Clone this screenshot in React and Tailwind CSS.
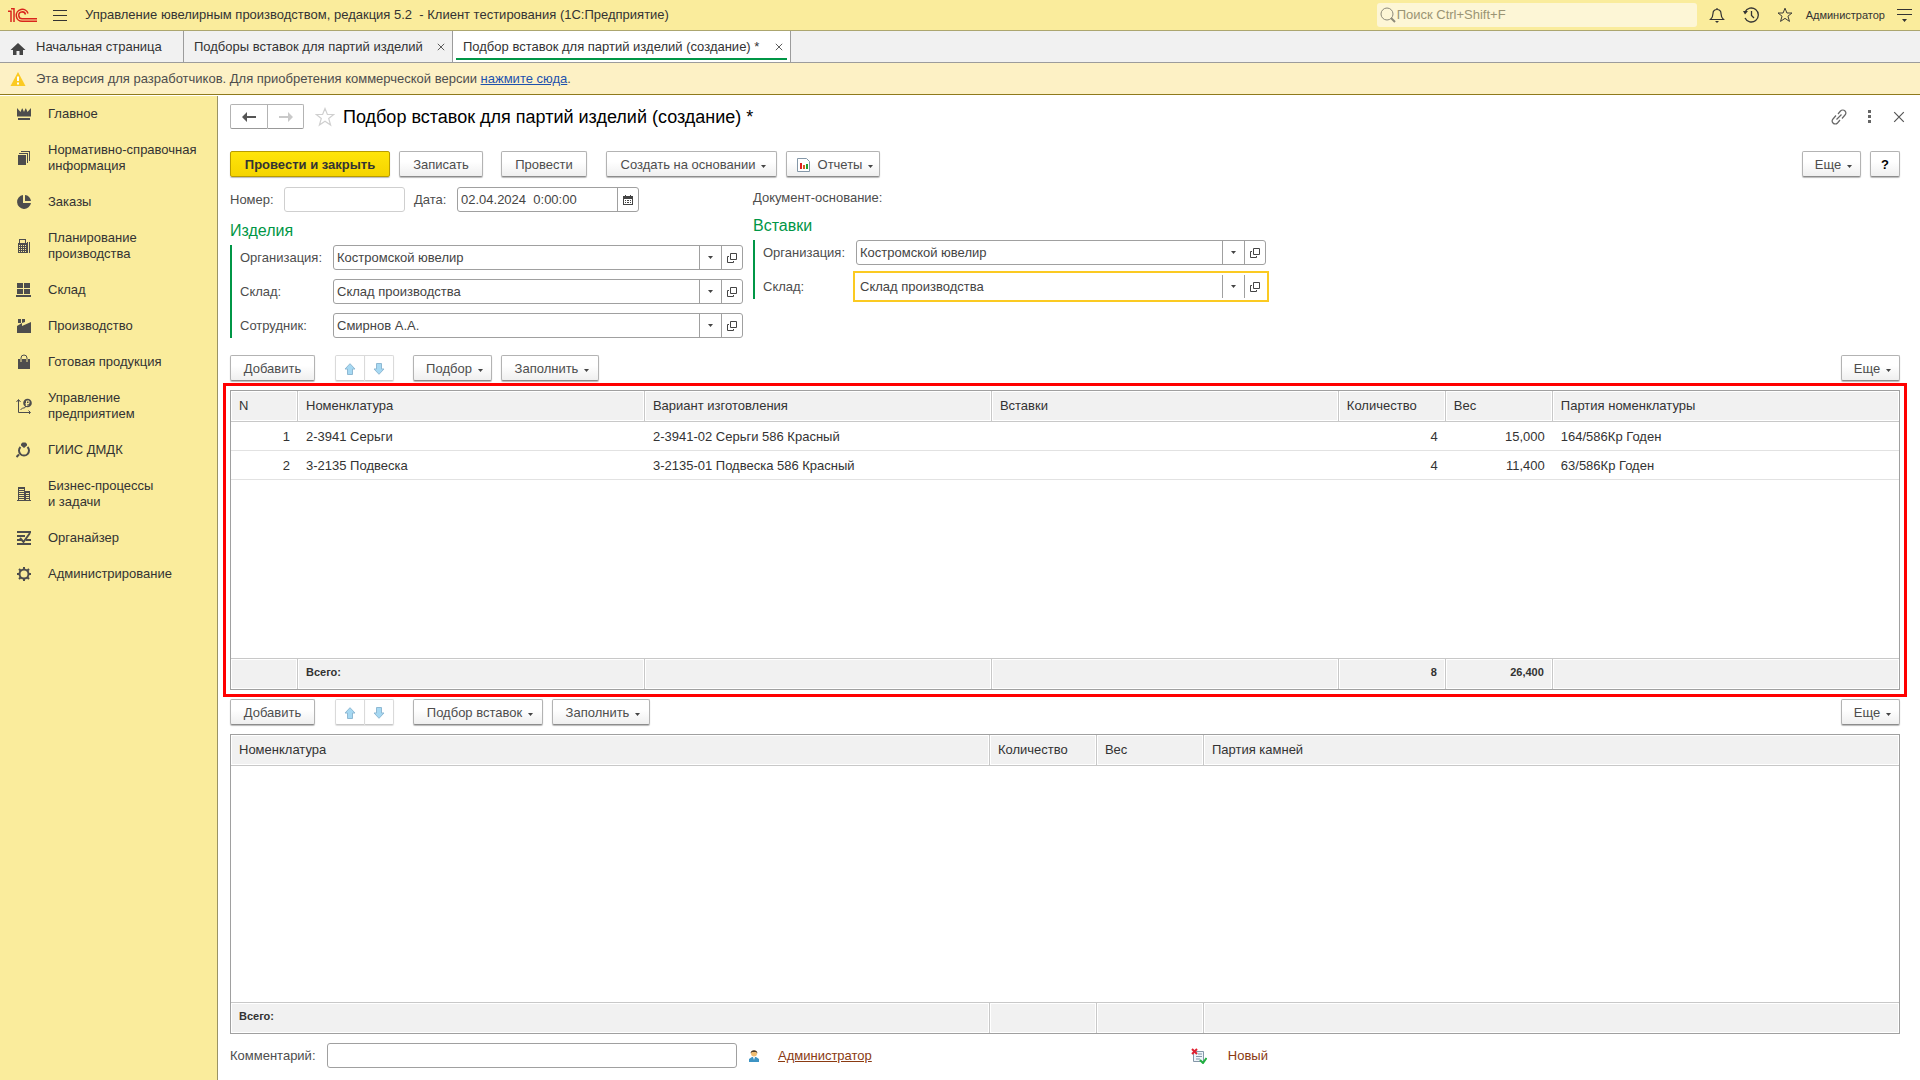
import React, { useState } from 'react';

const sections = [
  { label: 'Главное', icon: 'crown' },
  { label: 'Нормативно-справочная информация', icon: 'books' },
  { label: 'Заказы', icon: 'pie' },
  { label: 'Планирование производства', icon: 'calc' },
  { label: 'Склад', icon: 'boxes' },
  { label: 'Производство', icon: 'factory' },
  { label: 'Готовая продукция', icon: 'bag' },
  { label: 'Управление предприятием', icon: 'growth' },
  { label: 'ГИИС ДМДК', icon: 'ring' },
  { label: 'Бизнес-процессы и\u00a0задачи', icon: 'buildings' },
  { label: 'Органайзер', icon: 'organizer' },
  { label: 'Администрирование', icon: 'gear' }
];

const items = [
  { n: 1, name: '2-3941 Серьги', variant: '2-3941-02 Серьги 586 Красный', inserts: '', qty: '4', weight: '15,000', batch: '164/586Кр Годен' },
  { n: 2, name: '3-2135 Подвеска', variant: '3-2135-01 Подвеска 586 Красный', inserts: '', qty: '4', weight: '11,400', batch: '63/586Кр Годен' }
];

const sectionIcons = {
  crown: (
    <>
      <path d="M1 2l3.500 4L6 2.500h.5L8 6l1.500-3.500h.5L11.500 6 15 2v8.500H1z" />
      <path d="M2 12h12v2H2z" />
    </>
  ),
  books: (
    <g shapeRendering="crispEdges">
      <path d="M2 5h8v10H2z" />
      <path d="M3 3h9v10h-1V4H3z" />
      <path d="M5 1h9v10h-1V2H5z" />
    </g>
  ),
  pie: (
    <>
      <path d="M7 1a7 7 0 1 0 8 8H7z" />
      <path d="M9 1a6.500 6.500 0 0 1 6 6H9z" />
    </>
  ),
  calc: (
    <g shapeRendering="crispEdges">
      <path fillRule="evenodd" d="M3 1h7v4h1v10H2V5h1zM4 2v3h5V2zM3 7v1h1V7zM5 7v1h1V7zM7 7v1h1V7zM9 7v1h1V7zM3 9v1h1V9zM5 9v1h1V9zM7 9v1h1V9zM9 9v1h1V9zM3 11v1h1v-1zM5 11v1h1v-1zM7 11v1h1v-1zM9 11v1h1v-1zM3 13v1h1v-1zM5 13v1h1v-1zM7 13v1h1v-1zM9 13v1h1v-1z" />
      <path d="M11 4h1v11h-1zM13 4h1v11h-1z" />
    </g>
  ),
  boxes: <path shapeRendering="crispEdges" d="M1 1h6v5H1zM8 1h6v5H8zM1 7h6v5H1zM8 7h6v5H8zM0 13h15v2H0z" />,
  factory: <path d="M2 1h3v4H2zM6 1h3v3L6 5zM1 8l5-3v3l9-4v11H1z" />,
  bag: (
    <>
      <path d="M2 5h12v10H2z" />
      <path d="M5 8V4a3 3 0 0 1 6 0v4" fill="none" stroke="#faec9c" />
      <path d="M5 5V4a3 3 0 0 1 6 0v1" fill="none" stroke="#4d4d4d" />
    </>
  ),
  growth: (
    <>
      <path d="M2.500 2v12.500H14M.5 4l2-2.500 2 2.500M12.500 12.500l2 2-2 2M4.500 12l2-2h2l2-3" fill="none" stroke="#4d4d4d" />
      <circle cx="11.500" cy="5" r="4.300" />
      <path d="M10.500 8V3h2.500v2.500H9.500M9.500 7h3" fill="none" stroke="#faec9c" />
    </>
  ),
  ring: (
    <>
      <path d="M4.500 5a5 5 0 1 0 7 0M3 12.500L.5 15" fill="none" stroke="#4d4d4d" strokeWidth="2" />
      <path d="M5 2l1.500-1.500h3L11 2v1.500L8 6 5 3.500z" />
    </>
  ),
  buildings: (
    <path shapeRendering="crispEdges" fillRule="evenodd" d="M2 1h7v4h5v9h1v1H1v-1h1zM3 3v1h5V3zM3 5v1h5V5zM3 7v1h5V7zM3 9v1h5V9zM3 11v1h5v-1zM3 13v1h5v-1zM10 7v1h3V7zM10 9v1h3V9zM10 11v1h3v-1zM10 13v1h3v-1z" />
  ),
  organizer: (
    <>
      <path d="M1 1h14v2H1zM1 5h8v2H1zM1 9h4v2H1zM10 9h5v2h-5zM1 13h14v2H1z" />
      <path d="M4 8l3.500 4L14 3" fill="none" stroke="#4d4d4d" strokeWidth="2" />
    </>
  ),
  gear: (
    <>
      <circle cx="8" cy="8" r="4.500" fill="none" stroke="#4d4d4d" strokeWidth="2" />
      <path d="M8 1v3M8 12v3M1 8h3M12 8h3M3 3l2 2M11 11l2 2M3 13l2-2M11 5l2-2" stroke="#4d4d4d" strokeWidth="2" />
    </>
  )
};

const SectionIcon = ({ name }) => (
  <svg viewBox="0 0 16 16" className="h-4 w-4 shrink-0" fill="#4d4d4d">
    {sectionIcons[name]}
  </svg>
);

const Caret = () => (
  <svg viewBox="0 0 5 3" className="h-[3px] w-[5px] shrink-0" fill="#444">
    <path d="M0 0h5L2.500 3z" />
  </svg>
);

const OpenIcon = () => (
  <svg viewBox="0 0 10 10" className="h-2.5 w-2.5" fill="none" stroke="#444">
    <path d="M3.500 .5h6v6h-6zM2 3.500H.5v6h6V8" />
  </svg>
);

const StarIcon = ({ className }) => (
  <svg viewBox="0 0 20 20" className={className} fill="none" stroke="currentColor" strokeWidth="1.200">
    <path d="M10 1.500l2.400 6h6.300l-5 4 1.900 6.500-5.600-3.800L4.400 18l1.900-6.500-5-4h6.300z" />
  </svg>
);

const CloseIcon = ({ className }) => (
  <svg viewBox="0 0 10 10" className={className} fill="none" stroke="currentColor">
    <path d="M1 1l8 8M9 1L1 9" />
  </svg>
);

const Button = ({ children, className = '', menu = false, ...props }) => (
  <button
    type="button"
    className={`flex h-[26px] items-center justify-center rounded-xs border border-[#b3b3b3] border-b-[#8c8c8c] bg-linear-to-b from-white from-40% to-[#efefef] pt-px text-[#4d4d4d] shadow-[0_1px_1px_#bbb] ${className}`}
    {...props}
  >
    {menu && <span className="w-1" />}
    {children}
    {menu && <span className="ml-1.5 mt-1"><Caret /></span>}
  </button>
);

const MoveButtons = () => (
  <div className="mr-[19px] flex">
    <button type="button" aria-label="Переместить вверх" className="flex h-[26px] w-[30px] items-center justify-center rounded-l-xs border border-[#dadada] border-b-[#c8c8c8] pt-px shadow-[0_1px_1px_#ddd]">
      <svg viewBox="0 0 12 12" className="h-3 w-3" fill="#a6d8f2" stroke="#8fb9d3"><path d="M6 .7L11 6H8.500v5.500h-5V6H1z" /></svg>
    </button>
    <button type="button" aria-label="Переместить вниз" className="flex h-[26px] w-[29px] items-center justify-center rounded-r-xs border border-l-0 border-[#dadada] border-b-[#c8c8c8] pt-px shadow-[0_1px_1px_#ddd]">
      <svg viewBox="0 0 12 12" className="h-3 w-3" fill="#a6d8f2" stroke="#8fb9d3"><path d="M6 11.300L11 6H8.500V.5h-5V6H1z" /></svg>
    </button>
  </div>
);

const RefField = ({ id, label, value, focused = false }) => {
  const [text, setText] = useState(value);
  return (
    <div className="flex items-center">
      <label htmlFor={id} className="w-[93px] shrink-0">{label}</label>
      <div className={focused
        ? '-mx-[3px] -my-[3px] flex h-[31px] w-[416px] border-2 border-[#fbca22] p-[2px]'
        : 'flex h-[25px] w-[410px] rounded-[3px] border border-[#a0a0a0]'}
      >
        <input
          id={id}
          value={text}
          onChange={(e) => setText(e.target.value)}
          className="min-w-0 flex-1 bg-transparent pl-[3px] text-[#444] outline-none"
        />
        <button type="button" aria-label="Выбрать из списка" className="flex w-[22px] items-center justify-center border-l border-[#a0a0a0]">
          <Caret />
        </button>
        <button type="button" aria-label="Открыть" className="flex w-[21px] items-center justify-center border-l border-[#a0a0a0]">
          <OpenIcon />
        </button>
      </div>
    </div>
  );
};

const headCell = 'border-r border-b border-[#c8c8c8] bg-[#f1f1f1] px-2 text-left font-normal shadow-[inset_0_0_0_1px_#fff] last:border-r-0';
const footCell = 'border-r border-t border-[#c8c8c8] bg-[#f1f1f1] px-2 pb-1 text-[11px] font-bold shadow-[inset_0_0_0_1px_#fff] last:border-r-0';
const bodyCell = 'border-b border-[#e2e2e2] px-2 pt-px';

const ItemsTable = () => (
  <table className="h-full w-full table-fixed border-separate border-spacing-0 text-[#333]">
    <colgroup>
      <col className="w-[67px]" />
      <col className="w-[20.8%]" />
      <col className="w-[20.8%]" />
      <col className="w-[20.8%]" />
      <col className="w-[107px]" />
      <col className="w-[107px]" />
      <col />
    </colgroup>
    <thead>
      <tr className="h-[31px]">
        <th className={headCell}>N</th>
        <th className={headCell}>Номенклатура</th>
        <th className={headCell}>Вариант изготовления</th>
        <th className={headCell}>Вставки</th>
        <th className={headCell}>Количество</th>
        <th className={headCell}>Вес</th>
        <th className={headCell}>Партия номенклатуры</th>
      </tr>
    </thead>
    <tbody>
      {items.map((item) => (
        <tr key={item.n} className="h-[29px]">
          <td className={`${bodyCell} text-right`}>{item.n}</td>
          <td className={bodyCell}>{item.name}</td>
          <td className={bodyCell}>{item.variant}</td>
          <td className={bodyCell}>{item.inserts}</td>
          <td className={`${bodyCell} text-right`}>{item.qty}</td>
          <td className={`${bodyCell} text-right`}>{item.weight}</td>
          <td className={bodyCell}>{item.batch}</td>
        </tr>
      ))}
      <tr className="h-full">
        <td colSpan={7} />
      </tr>
    </tbody>
    <tfoot>
      <tr className="h-[31px]">
        <td className={footCell} />
        <td className={footCell}>Всего:</td>
        <td className={footCell} />
        <td className={footCell} />
        <td className={`${footCell} text-right`}>8</td>
        <td className={`${footCell} text-right`}>26,400</td>
        <td className={footCell} />
      </tr>
    </tfoot>
  </table>
);

const InsertsTable = () => (
  <table className="h-full w-full table-fixed border-separate border-spacing-0 text-[#333]">
    <colgroup>
      <col className="w-[45.5%]" />
      <col className="w-[107px]" />
      <col className="w-[107px]" />
      <col />
    </colgroup>
    <thead>
      <tr className="h-[31px]">
        <th className={headCell}>Номенклатура</th>
        <th className={headCell}>Количество</th>
        <th className={headCell}>Вес</th>
        <th className={headCell}>Партия камней</th>
      </tr>
    </thead>
    <tbody>
      <tr className="h-full">
        <td colSpan={4} />
      </tr>
    </tbody>
    <tfoot>
      <tr className="h-[31px]">
        <td className={footCell}>Всего:</td>
        <td className={footCell} />
        <td className={footCell} />
        <td className={footCell} />
      </tr>
    </tfoot>
  </table>
);

const Header = () => (
  <header className="flex h-[31px] shrink-0 items-center border-b border-[#aca66f] bg-[#faec9c] px-2 text-[#333]">
    <svg viewBox="0 0 30 15" className="h-[15px] w-[30px]" fill="none" stroke="#d9251c" strokeWidth="1.500">
      <path d="M0 3.200h3V14M3 .8h3V14" />
      <path d="M20 5.500A6 6 0 1 0 14.500 13.300H29" />
      <path d="M17.500 6.500A3.400 3.400 0 1 0 14.500 10.700H29" />
    </svg>
    <button type="button" aria-label="Меню" className="ml-[15px] flex w-[14px] flex-col gap-1">
      <span className="h-px bg-[#333]" />
      <span className="h-px bg-[#333]" />
      <span className="h-px bg-[#333]" />
    </button>
    <span className="ml-[18px] flex-1 whitespace-pre">Управление ювелирным производством, редакция 5.2  - Клиент тестирования (1С:Предприятие)</span>
    <label className="flex h-6 w-[320px] items-center rounded-[3px] bg-[#fdf6d6] pl-[3px]">
      <svg viewBox="0 0 16 16" className="h-4 w-4" fill="none" stroke="#8d8a7a">
        <circle cx="7" cy="7" r="6" />
        <path d="M11 11l4 4" strokeWidth="2" />
      </svg>
      <input type="search" aria-label="Поиск" placeholder="Поиск Ctrl+Shift+F" className="min-w-0 flex-1 bg-transparent pb-px pl-px outline-none placeholder:text-[#9a9474]" />
    </label>
    <button type="button" aria-label="Оповещения" className="ml-3">
      <svg viewBox="0 0 16 16" className="h-4 w-4" fill="none" stroke="#333" strokeWidth="1.200">
        <path d="M1.500 12.500h13c-2-2-2.500-3-2.500-6C12 4 10.500 2.500 8 2.500S4 4 4 6.500c0 3-.5 4-2.500 6zM8 1v1.500" />
        <path d="M6 14h4l-2 2z" fill="#333" stroke="none" />
      </svg>
    </button>
    <button type="button" aria-label="История" className="ml-[18px]">
      <svg viewBox="0 0 16 16" className="h-4 w-4" fill="none" stroke="#333" strokeWidth="1.300">
        <path d="M2 5a7 7 0 1 1 0 6M8.500 4v4.500L11 11" />
        <path d="M0 4h5L2 7.500z" fill="#333" stroke="none" />
      </svg>
    </button>
    <button type="button" aria-label="Избранное" className="ml-[18px]">
      <StarIcon className="h-4 w-4" />
    </button>
    <button type="button" className="ml-[13px] text-[11px]">Администратор</button>
    <button type="button" aria-label="Настройки" className="ml-3">
      <svg viewBox="0 0 15 14" className="h-3.5 w-[15px]" fill="#333">
        <path d="M0 1h15v1H0zM0 6h15v1H0zM5 11h5l-2.500 3z" />
      </svg>
    </button>
  </header>
);

const Tabs = () => (
  <nav className="flex h-8 shrink-0 border-b border-[#9c9c9c] bg-[#f1f1f1] text-[#333]">
    <button type="button" className="flex w-[184px] items-center border-r border-[#9c9c9c] pl-[10px]">
      <svg viewBox="0 0 16 14" className="mt-1 h-3.5 w-4" fill="#444">
        <path d="M8 1l7.500 7H13v5H9.500V9h-3v4H3V8H.5z" />
      </svg>
      <span className="ml-[10px]">Начальная страница</span>
    </button>
    <div className="flex w-[269px] items-center justify-between border-r border-[#9c9c9c] pl-[10px] pr-[7px]">
      <button type="button">Подборы вставок для партий изделий</button>
      <button type="button" aria-label="Закрыть"><CloseIcon className="h-2 w-2" /></button>
    </div>
    <div className="flex w-[338px] border-r border-[#9c9c9c] bg-white px-[3px] pb-[2px]">
      <div className="flex flex-1 items-center justify-between border-b-2 border-[#009646] pl-[7px] pr-1 pt-1">
        <button type="button">Подбор вставок для партий изделий (создание) *</button>
        <button type="button" aria-label="Закрыть"><CloseIcon className="h-2 w-2" /></button>
      </div>
    </div>
  </nav>
);

const App = () => {
  return (
    <div className="flex h-screen min-h-[900px] flex-col bg-white font-['Liberation_Sans',Arial,sans-serif] text-[13px] leading-4 text-[#4d4d4d]">
      <Header />
      <Tabs />
      <div className="flex h-8 shrink-0 items-center border-b border-[#8f7a1c] bg-[#fdf1c5] pl-[10px]">
        <svg viewBox="0 0 16 16" className="mr-[10px] h-4 w-4">
          <path d="M8 1l7.500 14H.5z" fill="#fbca22" />
          <path d="M7 5.500h2V10H7zM7 11.500h2v2H7z" fill="#fff" />
        </svg>
        <p>Эта версия для разработчиков. Для приобретения коммерческой версии <a href="#buy" className="text-[#1d52ad] underline">нажмите сюда</a>.</p>
      </div>

      <div className="flex min-h-0 flex-1">
        <aside className="mt-px w-[218px] shrink-0 border-r border-[#9a9364] bg-[#faec9c] text-[#333]">
          {sections.map((section) => (
            <button type="button" key={section.label} className="flex w-full items-center gap-4 py-[10px] pl-4 pr-3 text-left">
              <SectionIcon name={section.icon} />
              <span>{section.label}</span>
            </button>
          ))}
        </aside>

        <main className="flex min-w-0 flex-1 flex-col px-3 pb-3 pr-5 pt-[9px]">
          {/* Form title */}
          <div className="flex h-[25px] items-center">
            <div className="flex">
              <button type="button" aria-label="Назад" className="flex h-[25px] w-[38px] items-center justify-center rounded-l-xs border border-[#b3b3b3] border-b-[#999]">
                <svg viewBox="0 0 14 10" className="h-2.5 w-3.5" fill="#555"><path d="M0 5l5-5v4h9v2H5v4z" /></svg>
              </button>
              <button type="button" aria-label="Вперед" className="flex h-[25px] w-9 items-center justify-center rounded-r-xs border border-l-0 border-[#b3b3b3] border-b-[#999]">
                <svg viewBox="0 0 14 10" className="h-2.5 w-3.5" fill="#c9c9c9"><path d="M14 5L9 0v4H0v2h9v4z" /></svg>
              </button>
            </div>
            <button type="button" aria-label="В избранное" className="ml-[11px] text-[#d0d0d0]"><StarIcon className="h-5 w-5" /></button>
            <h1 className="ml-2 flex-1 text-[18px] leading-5 text-black">Подбор вставок для партий изделий (создание) *</h1>
            <button type="button" aria-label="Ссылка">
              <svg viewBox="0 0 16 16" className="h-4 w-4" fill="none" stroke="#666" strokeWidth="1.200">
                <path d="M7 5l2.500-3a3 3 0 0 1 4.500 0 3 3 0 0 1 0 4l-3 3.500M9 11l-2.500 3a3 3 0 0 1-4.500 0 3 3 0 0 1 0-4l3-3.500M5.500 10.500l5-5" />
              </svg>
            </button>
            <button type="button" aria-label="Дополнительно" className="ml-[21px] flex w-[3px] flex-col gap-[2px]">
              <span className="h-[3px] bg-[#666]" />
              <span className="h-[3px] bg-[#666]" />
              <span className="h-[3px] bg-[#666]" />
            </button>
            <button type="button" aria-label="Закрыть" className="-mr-[5px] ml-[22px] text-[#555]"><CloseIcon className="h-3 w-3" /></button>
          </div>

          {/* Command bar */}
          <div className="mt-[22px] flex">
            <button type="button" className="h-[26px] w-[160px] rounded-xs border border-[#b89c00] bg-linear-to-b from-[#ffe50a] to-[#f5d400] pt-px font-bold text-[#333] shadow-[0_1px_1px_#bbb]">Провести и закрыть</button>
            <Button className="ml-[9px] w-[84px]">Записать</Button>
            <Button className="ml-[18px] w-[86px]">Провести</Button>
            <Button className="ml-[19px] w-[171px]" menu>Создать на основании</Button>
            <Button className="ml-[9px] w-[94px]" menu>
              <svg viewBox="0 0 13 14" className="mr-2 h-3.5 w-[13px]">
                <path d="M.5.500h9l3 3v10H.5z" fill="#fff" stroke="#8497a8" />
                <path d="M3 5h2v6H3z" fill="#e02020" />
                <path d="M6 7h2v4H6z" fill="#d06020" />
                <path d="M9 6h2v5H9z" fill="#20a030" />
              </svg>
              Отчеты
            </Button>
            <Button className="ml-auto w-[59px]" menu>Еще</Button>
            <Button className="ml-[9px] w-[30px]"><span className="font-bold text-black">?</span></Button>
          </div>

          {/* Document attributes */}
          <div className="mt-[10px] flex">
            <div className="w-[513px]">
              <div className="flex items-center">
                <label htmlFor="number" className="w-[54px]">Номер:</label>
                <input id="number" className="h-[25px] w-[121px] rounded-[3px] border border-[#cfcfcf] px-1 outline-none" />
                <label htmlFor="date" className="ml-[9px] w-[43px]">Дата:</label>
                <div className="flex h-[25px] w-[182px] rounded-[3px] border border-[#a0a0a0]">
                  <input id="date" defaultValue="02.04.2024  0:00:00" className="min-w-0 flex-1 whitespace-pre pl-[3px] text-[#444] outline-none" />
                  <button type="button" aria-label="Календарь" className="flex w-[21px] items-center justify-center border-l border-[#a0a0a0]">
                    <svg viewBox="0 0 10 10" className="h-2.5 w-2.5" fill="#444">
                      <path fillRule="evenodd" d="M0 1h2V0h1v1h4V0h1v1h2v9H0zM1 4v5h8V4z" />
                      <path d="M2 5h1v1H2zM4 5h2v1H4zM7 5h1v1H7zM2 7h1v1H2zM4 7h2v1H4zM7 7h1v1H7z" />
                    </svg>
                  </button>
                </div>
              </div>
              <h2 className="mt-[9px] text-[16px] leading-5 text-[#009646]">Изделия</h2>
              <div className="mt-1 flex flex-col gap-[9px] border-l-2 border-[#009646] pl-2">
                <RefField id="org" label="Организация:" value="Костромской ювелир" />
                <RefField id="store" label="Склад:" value="Склад производства" />
                <RefField id="employee" label="Сотрудник:" value="Смирнов А.А." />
              </div>
            </div>
            <div className="ml-[10px] mt-[3px]">
              <p>Документ-основание:</p>
              <h2 className="mt-[10px] text-[16px] leading-5 text-[#009646]">Вставки</h2>
              <div className="mt-1 flex flex-col gap-[9px] border-l-2 border-[#009646] pl-2">
                <RefField id="insOrg" label="Организация:" value="Костромской ювелир" />
                <RefField id="insStore" label="Склад:" value="Склад производства" focused />
              </div>
            </div>
          </div>

          {/* Items */}
          <div className="mt-[17px] flex">
            <Button className="mr-5 w-[85px]">Добавить</Button>
            <MoveButtons />
            <Button className="w-[79px]" menu>Подбор</Button>
            <Button className="ml-[9px] w-[98px]" menu>Заполнить</Button>
            <Button className="ml-auto w-[59px]" menu>Еще</Button>
          </div>
          <div className="relative mt-[9px] min-h-0 flex-1 basis-0 border border-[#a0a0a0]">
            <ItemsTable />
            <div className="pointer-events-none absolute -inset-2 border-3 border-[#f00]" />
          </div>

          {/* Inserts */}
          <div className="mt-[9px] flex">
            <Button className="mr-5 w-[85px]">Добавить</Button>
            <MoveButtons />
            <Button className="w-[130px]" menu>Подбор вставок</Button>
            <Button className="ml-[9px] w-[98px]" menu>Заполнить</Button>
            <Button className="ml-auto w-[59px]" menu>Еще</Button>
          </div>
          <div className="mt-[9px] min-h-0 flex-1 basis-0 border border-[#a0a0a0]">
            <InsertsTable />
          </div>

          {/* Footer */}
          <div className="mt-[9px] flex items-center">
            <label htmlFor="comment" className="w-[97px]">Комментарий:</label>
            <input id="comment" className="h-[25px] w-[410px] rounded-[3px] border border-[#a0a0a0] px-1 outline-none" />
            <svg viewBox="0 0 10 14" className="ml-3 h-3.5 w-2.5">
              <path d="M0 13V10l3-2h4l3 2v3z" fill="#3d94c4" />
              <circle cx="5" cy="4.500" r="3" fill="#f0bd72" />
              <path d="M1.500 4.500C1.500 0 8.500 0 8.500 4.500L7 3H3z" fill="#4a3a2a" />
              <path d="M4 8h2l-1 3z" fill="#fff" />
            </svg>
            <a href="#author" className="ml-[19px] text-[#8a3a12] underline">Администратор</a>
            <div className="ml-[319px] flex items-center">
              <svg viewBox="0 0 16 16" className="h-4 w-4">
                <path d="M2.500 3.500h10v10h-10z" fill="#eef4fa" stroke="#8497a8" />
                <path d="M7 6h4M5 8.500h6M5 11h4" stroke="#8497a8" />
                <path d="M1 1l5 5M6 1L1 6" stroke="#e02030" strokeWidth="2" />
                <path d="M9 12l3 3 3.500-5" fill="none" stroke="#20b040" strokeWidth="2" />
              </svg>
              <span className="ml-[21px] text-[#8a3a12]">Новый</span>
            </div>
          </div>
        </main>
      </div>
    </div>
  );
};

export default App;
